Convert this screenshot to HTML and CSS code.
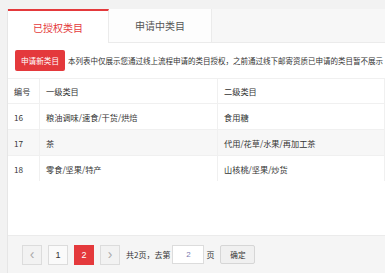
FILE: index.html
```html
<!DOCTYPE html>
<html lang="zh-CN">
<head>
    <meta charset="UTF-8">
    <title>类目管理</title>
    <link rel="stylesheet" href="styles.css">
</head>
<body>
    <div class="panel">
        <div class="tabs">
            <div class="tab active">已授权类目</div>
            <div class="tab">申请中类目</div>
        </div>

        <div class="notice">
            <button class="apply-button">申请新类目</button>
            <span class="notice-text">本列表中仅展示您通过线上流程申请的类目授权，之前通过线下邮寄资质已申请的类目暂不展示</span>
        </div>

        <table class="cat-table">
            <thead>
                <tr>
                    <th class="col-no">编号</th>
                    <th class="col-first">一级类目</th>
                    <th>二级类目</th>
                </tr>
            </thead>
            <tbody>
                <tr>
                    <td>16</td>
                    <td>粮油调味/速食/干货/烘焙</td>
                    <td>食用糖</td>
                </tr>
                <tr class="striped">
                    <td>17</td>
                    <td>茶</td>
                    <td>代用/花草/水果/再加工茶</td>
                </tr>
                <tr>
                    <td>18</td>
                    <td>零食/坚果/特产</td>
                    <td>山核桃/坚果/炒货</td>
                </tr>
            </tbody>
        </table>

        <div class="pager">
            <a class="page-btn disabled">&lsaquo;</a>
            <a class="page-btn">1</a>
            <a class="page-btn current">2</a>
            <a class="page-btn disabled">&rsaquo;</a>
            <span class="pager-text">共2页，去第</span>
            <input class="page-input" type="text" value="2">
            <span class="pager-text">页</span>
            <button class="confirm-button">确定</button>
        </div>
    </div>
</body>
</html>
```

FILE: styles.css
```css
body {
    margin: 0;
    padding: 9px 0 0 7px;
    background-color: #f2f2f2;
    font-family: "Noto Sans CJK SC", "Liberation Sans", sans-serif;
    color: #333;
    overflow: hidden;
}

.panel {
    background-color: white;
    border-left: 1px solid #e6e6e6;
    height: 264px;
    display: flex;
    flex-direction: column;
}

/* tabs */
.tabs {
    display: flex;
    height: 34px;
    background-color: #f7f7f7;
    border-bottom: 1px solid #ebebeb;
    box-sizing: border-box;
}

.tab {
    width: 103px;
    display: flex;
    align-items: center;
    justify-content: center;
    font-size: 10px;
    color: #555;
    background-color: #fdfdfd;
    border-right: 1px solid #ebebeb;
    box-sizing: border-box;
}

.tab.active {
    width: 101px;
    color: #e4393c;
    background-color: white;
    border-top: 2px solid #e4393c;
    margin-bottom: -1px;
}

/* notice */
.notice {
    display: flex;
    align-items: center;
    gap: 3px;
    padding: 7px 0 7px 7px;
    white-space: nowrap;
    overflow: hidden;
}

.apply-button {
    background-color: #e4393c;
    color: white;
    border: none;
    border-radius: 2px;
    height: 21px;
    width: 50px;
    padding: 0;
    font-family: inherit;
    font-size: 7.6px;
    flex-shrink: 0;
}

.notice-text {
    font-size: 7.5px;
    color: #333;
}

/* table */
.cat-table {
    width: 100%;
    border-collapse: collapse;
    font-size: 8.2px;
    border-top: 1px solid #f0f0f0;
}

.cat-table th,
.cat-table td {
    text-align: left;
    font-weight: normal;
    padding: 0 6px;
    height: 25px;
    border-bottom: 1px solid #f0f0f0;
    border-right: 1px solid #f0f0f0;
}

.cat-table th {
    height: 24px;
}

.cat-table .col-no {
    width: 19px;
}

.cat-table .col-first {
    width: 165px;
}

.cat-table tr.striped td {
    background-color: #f7f7f7;
}

.cat-table tbody tr:last-child td {
    border-bottom: none;
}

/* pager */
.pager {
    margin-top: auto;
    height: 38px;
    background-color: #f5f5f5;
    border-top: 1px solid #ebebeb;
    box-sizing: border-box;
    display: flex;
    align-items: center;
    padding: 0 0 0 14px;
    font-size: 8px;
}

.page-btn {
    width: 20px;
    height: 20px;
    box-sizing: border-box;
    border: 1px solid #dcdcdc;
    background-color: #fafafa;
    display: flex;
    align-items: center;
    justify-content: center;
    margin-right: 6px;
    font-family: "Liberation Sans", sans-serif;
    font-size: 9px;
    color: #333;
}

.page-btn.disabled {
    background-color: #f2f2f2;
    color: #aaa;
    font-size: 14px;
    padding-bottom: 2px;
}

.page-btn.current {
    background-color: #e4393c;
    border-color: #e4393c;
    color: white;
}

.pager-text {
    color: #333;
}

.page-input {
    width: 32px;
    height: 19px;
    box-sizing: border-box;
    border: 1px solid #dcdcdc;
    margin: 0 2px;
    padding: 0;
    text-align: center;
    font-family: "Liberation Sans", sans-serif;
    font-size: 8px;
    color: #7a7ab0;
    background-color: white;
}

.confirm-button {
    margin-left: 6px;
    width: 35px;
    height: 19px;
    border: 1px solid #d6d6d6;
    border-radius: 2px;
    background-color: #f0f0f0;
    font-family: inherit;
    font-size: 7.6px;
    color: #333;
    padding: 0;
}
```
